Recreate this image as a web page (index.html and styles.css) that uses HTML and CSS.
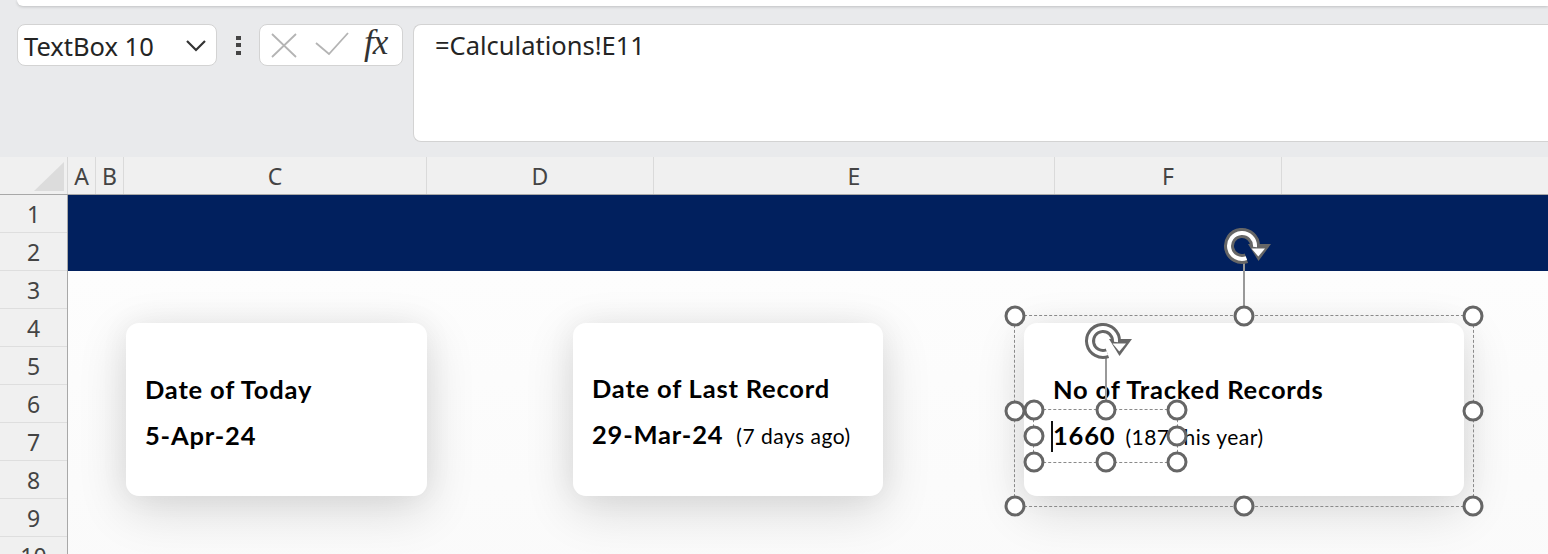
FILE: index.html
```html
<!DOCTYPE html>
<html>
<head>
<meta charset="utf-8">
<link rel="stylesheet" href="styles.css">
</head>
<body>
<div class="app">
  <div class="chrome">
    <div class="ribbon-edge"></div>
    <div class="fbar">
      <div class="namebox">
        <span class="name">TextBox 10</span>
        <svg class="chev" width="22" height="14" viewBox="0 0 22 14"><path d="M2 2 L11 11 L20 2" fill="none" stroke="#333" stroke-width="2.2"/></svg>
      </div>
      <div class="dots"><i></i><i></i><i></i></div>
      <div class="fxbox">
        <svg class="ico-x" width="26" height="25" viewBox="0 0 26 25"><path d="M1 1 L25 24 M25 1 L1 24" stroke="#b4b4b4" stroke-width="1.8" fill="none"/></svg>
        <svg class="ico-ok" width="34" height="24" viewBox="0 0 34 24"><path d="M1 11 L14 22 L33 1" stroke="#b4b4b4" stroke-width="1.8" fill="none"/></svg>
        <span class="fx">fx</span>
      </div>
      <div class="formula">=Calculations!E11</div>
    </div>
  </div>

  <div class="sheet">
    <div class="colheads">
      <div class="corner"><div class="tri"></div></div>
      <div class="ch w-a">A</div>
      <div class="ch w-b">B</div>
      <div class="ch w-c">C</div>
      <div class="ch w-d">D</div>
      <div class="ch w-e">E</div>
      <div class="ch w-f">F</div>
      <div class="ch w-g"></div>
    </div>
    <div class="body">
      <div class="rowheads">
        <div class="rh">1</div><div class="rh">2</div><div class="rh">3</div><div class="rh">4</div><div class="rh">5</div>
        <div class="rh">6</div><div class="rh">7</div><div class="rh">8</div><div class="rh">9</div><div class="rh">10</div>
      </div>
      <div class="canvas">
        <div class="band"></div>
        <div class="cards">
          <div class="card card1">
            <div class="title">Date of Today</div>
            <div class="value"><b>5-Apr-24</b></div>
          </div>
          <div class="card card2">
            <div class="title">Date of Last Record</div>
            <div class="value"><b>29-Mar-24</b><span class="note">(7 days ago)</span></div>
          </div>
          <div class="card card3">
            <div class="title">No of Tracked Records</div>
            <div class="value"><span class="caret"></span><b>1660</b><span class="note">(187 this year)</span></div>

            <div class="sel outer">
              <div class="rotline"></div>
              <svg class="rot" width="64" height="50" viewBox="0 0 64 50">
                <path d="M29.4 37.2 A13 13 0 1 1 38 25" fill="none" stroke="#666" stroke-width="10"/>
                <path d="M31 23 L54 23 L41.5 40 Z" fill="#666"/>
                <path d="M29.4 37.2 A13 13 0 1 1 38 26" fill="none" stroke="#fff" stroke-width="4"/>
                <path d="M34.5 27.5 L48 27.5 L41.3 35.5 Z" fill="#fff"/>
              </svg>
              <span class="h tl"></span><span class="h tc"></span><span class="h tr"></span>
              <span class="h ml"></span><span class="h mr"></span>
              <span class="h bl"></span><span class="h bc"></span><span class="h br"></span>
            </div>

            <div class="sel inner">
              <div class="rotline"></div>
              <svg class="rot" width="64" height="50" viewBox="0 0 64 50">
                <path d="M29.4 37.2 A13 13 0 1 1 38 25" fill="none" stroke="#666" stroke-width="10"/>
                <path d="M31 23 L54 23 L41.5 40 Z" fill="#666"/>
                <path d="M29.4 37.2 A13 13 0 1 1 38 26" fill="none" stroke="#fff" stroke-width="4"/>
                <path d="M34.5 27.5 L48 27.5 L41.3 35.5 Z" fill="#fff"/>
              </svg>
              <span class="h tl"></span><span class="h tc"></span><span class="h tr"></span>
              <span class="h ml"></span><span class="h mr"></span>
              <span class="h bl"></span><span class="h bc"></span><span class="h br"></span>
            </div>
          </div>
        </div>
      </div>
    </div>
  </div>
</div>
</body>
</html>
```

FILE: styles.css
```css
* { box-sizing: border-box; }
html, body { margin: 0; padding: 0; }
body {
  width: 1548px;
  height: 554px;
  overflow: hidden;
  background: #ffffff;
  font-family: "Noto Sans", "Open Sans", sans-serif;
  color: #222;
}
.app { width: 1548px; height: 554px; overflow: hidden; }

/* ---------- top chrome / formula bar ---------- */
.chrome {
  height: 157px;
  background: #e9eaec;
  overflow: hidden;
}
.ribbon-edge {
  height: 6px;
  margin-left: 17px;
  background: #fff;
  border-radius: 0 0 0 10px;
  box-shadow: 0 1px 3px rgba(0,0,0,0.18);
}
.fbar {
  display: flex;
  align-items: flex-start;
  padding-left: 17px;
  margin-top: 18px;
}
.namebox {
  width: 200px;
  height: 42px;
  background: #fff;
  border: 1px solid #d3d3d3;
  border-radius: 8px;
  display: flex;
  align-items: center;
  justify-content: space-between;
  padding: 0 9px 0 6px;
}
.name {
  font-size: 25.5px;
  line-height: 34px;
  color: #242424;
  margin-top: 2px;
}
.chev { margin-top: 2px; }
.dots {
  width: 42px;
  height: 42px;
  display: flex;
  flex-direction: column;
  align-items: center;
  justify-content: center;
  gap: 3.5px;
}
.dots i {
  display: block;
  width: 5px;
  height: 4px;
  background: #444;
}
.fxbox {
  width: 144px;
  height: 42px;
  background: #fff;
  border: 1px solid #d3d3d3;
  border-radius: 8px;
  display: flex;
  align-items: center;
  padding-left: 11px;
}
.ico-x { margin-top: 1px; }
.ico-ok { margin-left: 18px; margin-top: -2px; }
.fx {
  margin-left: 15px;
  font-family: "Liberation Serif", "DejaVu Serif", serif;
  font-style: italic;
  font-size: 35px;
  color: #333;
  line-height: 1;
  margin-top: -5px;
  letter-spacing: -1px;
}
.formula {
  margin-left: 10px;
  flex: 1;
  height: 118px;
  background: #fff;
  border: 1px solid #d3d3d3;
  border-right: none;
  border-radius: 8px 0 0 8px;
  padding: 3px 0 0 21px;
  font-size: 25.5px;
  color: #242424;
}

/* ---------- sheet ---------- */
.sheet { background: #fff; }
.colheads {
  display: flex;
  height: 38px;
  background: #f0f0f0;
  border-bottom: 1px solid #a8a8a8;
}
.corner {
  width: 68px;
  height: 37px;
  border-right: 1px solid #d8d8d8;
  position: relative;
}
.tri {
  position: absolute;
  right: 3px;
  bottom: 3px;
  width: 0;
  height: 0;
  border-left: 30px solid transparent;
  border-bottom: 29px solid #dcdcdc;
}
.ch {
  height: 37px;
  border-right: 1px solid #dadada;
  display: flex;
  align-items: center;
  justify-content: center;
  font-size: 23px;
  color: #444;
}
.w-a { width: 28px; }
.w-b { width: 28px; }
.w-c { width: 303px; }
.w-d { width: 227px; }
.w-e { width: 401px; }
.w-f { width: 227px; }
.w-g { flex: 1; border-right: none; }

.body { display: flex; }
.rowheads {
  width: 68px;
  background: #f0f0f0;
  border-right: 1px solid #a8a8a8;
  flex: none;
}
.rh {
  height: 38px;
  display: flex;
  align-items: center;
  justify-content: center;
  font-size: 23px;
  color: #444;
  border-bottom: 1px solid #dedede;
  padding-top: 1px;
}
.canvas {
  flex: 1;
  background: #fff;
}
.band {
  height: 76px;
  background: #01205e;
}
.cards {
  display: flex;
  align-items: flex-start;
  padding: 52px 0 0 58px;
  height: 320px;
  background: linear-gradient(#fdfdfd, #fafafa);
}
.card {
  height: 173px;
  background: #fff;
  border-radius: 13px;
  box-shadow: 0 14px 50px rgba(0,0,0,0.14), 0 0 30px rgba(0,0,0,0.05);
  font-family: "Lato", "Noto Sans", sans-serif;
  color: #000;
  padding-top: 48px;
  position: relative;
  letter-spacing: 0.8px;
}
.card1 { width: 301px; padding-left: 19px; }
.card2 { width: 310px; padding-left: 19px; margin-left: 146px; padding-top: 47px; }
.card3 { width: 440px; padding-left: 29px; margin-left: 141px; }
.title {
  font-weight: 700;
  font-size: 25.5px;
  line-height: 36px;
}
.value {
  margin-top: 10px;
  font-size: 25.5px;
  line-height: 36px;
  display: flex;
  align-items: baseline;
}
.value b { font-weight: 700; }
.note {
  font-size: 21px;
  font-weight: 400;
  margin-left: 13px;
  letter-spacing: 0.5px;
}
.card3 .note { margin-left: 10px; }
.caret {
  display: inline-block;
  width: 2px;
  height: 31px;
  background: #111;
  margin-left: -2px;
  align-self: center;
}

/* ---------- selection overlays ---------- */
.sel {
  position: absolute;
  border: 1.5px dashed #8a8a8a;
}
.sel.outer { left: -10px; top: -8px; width: 460px; height: 192px; }
.sel.inner { left: 9px; top: 86px; width: 145px; height: 54px; }
.h {
  position: absolute;
  width: 21px;
  height: 21px;
  border: 3px solid #666;
  border-radius: 50%;
  background: #fff;
  transform: translate(-50%, -50%);
}
.tl { left: 0; top: 0; }
.tc { left: 50%; top: 0; }
.tr { left: 100%; top: 0; }
.ml { left: 0; top: 50%; }
.mr { left: 100%; top: 50%; }
.bl { left: 0; top: 100%; }
.bc { left: 50%; top: 100%; }
.br { left: 100%; top: 100%; }
.rotline {
  position: absolute;
  left: 50%;
  width: 2px;
  margin-left: -1px;
  background: #999;
}
.outer .rotline { top: -53px; height: 44px; }
.inner .rotline { top: -54px; height: 45px; }
.rot {
  position: absolute;
  left: 50%;
}
.outer .rot { top: -95px; margin-left: -27px; }
.inner .rot { top: -94px; margin-left: -28px; }
```
